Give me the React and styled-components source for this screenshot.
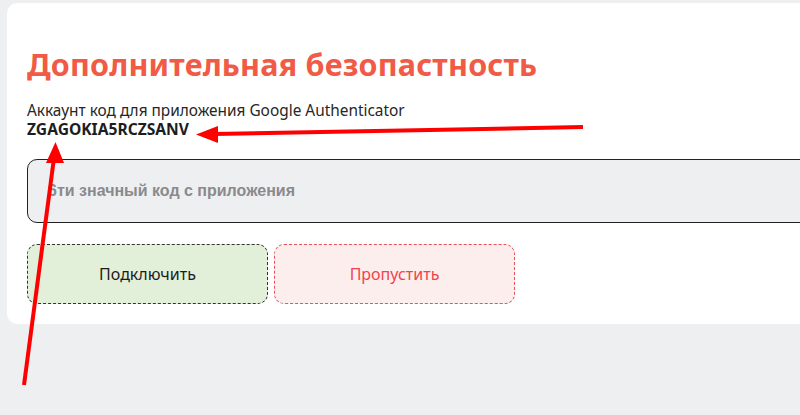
import React from "react";
import styled, { createGlobalStyle } from "styled-components";

const Global = createGlobalStyle`
  html, body { margin: 0; padding: 0; background: #eeeff1; overflow: hidden; }
  body { font-family: "Noto Sans", "Open Sans", sans-serif; }
`;

const Page = styled.div`
  position: relative;
  width: 800px;
  height: 415px;
  padding: 3px 0 0 7px;
  box-sizing: border-box;
  overflow: hidden;
`;

const Card = styled.div`
  width: 820px;
  height: 321px;
  background: #ffffff;
  border-radius: 10px;
  box-sizing: border-box;
  padding: 40px 0 0 20px;
  display: flex;
  flex-direction: column;
  overflow: hidden;
`;

const Title = styled.h1`
  margin: 0;
  font-family: "Noto Sans", sans-serif;
  font-weight: 700;
  font-size: 30.5px;
  line-height: 42px;
  color: #f15a45;
  letter-spacing: 0.2px;
`;

const Label = styled.div`
  margin-top: 17px;
  font-size: 15.4px;
  line-height: 18px;
  color: #262626;
  white-space: nowrap;
`;

const Code = styled.div`
  font-size: 15.6px;
  font-weight: 700;
  line-height: 18px;
  color: #1d1d1d;
`;

const Input = styled.input`
  margin-top: 21px;
  width: 790px;
  height: 64px;
  box-sizing: border-box;
  background: #eeeff1;
  border: 1px solid #222;
  border-radius: 10px;
  padding: 0 20px;
  font-family: "Liberation Sans", Arial, sans-serif;
  font-weight: 700;
  font-size: 16px;
  outline: none;
  &::placeholder { color: #8a8a8c; }
`;

const Buttons = styled.div`
  margin-top: 21px;
  display: flex;
  gap: 6px;
`;

const Button = styled.button`
  width: 241px;
  height: 60px;
  border-radius: 10px;
  font-family: "Noto Sans", sans-serif;
  font-size: 16px;
  border: 1px dashed ${p => (p.$danger ? "#e8525a" : "#333")};
  background: ${p => (p.$danger ? "#fdeeee" : "#e2efd9")};
  color: ${p => (p.$danger ? "#f2424a" : "#1c1c1c")};
  cursor: pointer;
`;

const Arrows = styled.svg`
  position: absolute;
  left: 0;
  top: 0;
  pointer-events: none;
`;

export default function App() {
  return (
    <>
      <Global />
      <Page>
        <Card>
          <Title>Дополнительная безопастность</Title>
          <Label>Аккаунт код для приложения Google Authenticator</Label>
          <Code>ZGAGOKIA5RCZSANV</Code>
          <Input placeholder="6ти значный код с приложения" />
          <Buttons>
            <Button>Подключить</Button>
            <Button $danger>Пропустить</Button>
          </Buttons>
        </Card>
        <Arrows width="800" height="415" viewBox="0 0 800 415">
          <line x1="583" y1="127" x2="214" y2="134" stroke="#ff0000" strokeWidth="4" />
          <polygon points="196,134.5 218,126 218,143" fill="#ff0000" />
          <line x1="24" y1="385" x2="54" y2="158" stroke="#ff0000" strokeWidth="4" />
          <polygon points="55.5,142 46,163 64,163" fill="#ff0000" />
        </Arrows>
      </Page>
    </>
  );
}
